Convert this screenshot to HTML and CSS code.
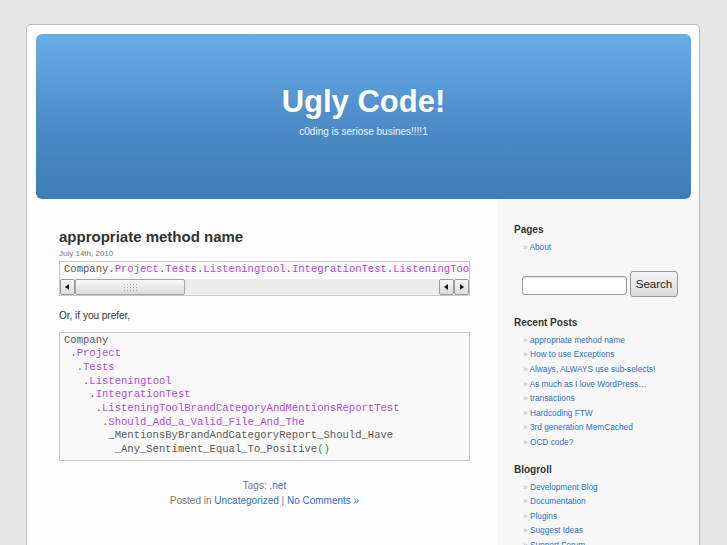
FILE: index.html
```html
<!DOCTYPE html>
<html lang="en">
<head>
<meta charset="utf-8">
<title>Ugly Code!</title>
<link rel="stylesheet" href="styles.css">
</head>
<body>
<div class="page">
  <div class="header-wrap">
    <header class="header">
      <h1 class="site-title">Ugly Code!</h1>
      <div class="site-desc">c0ding is seriose busines!!!!1</div>
    </header>
  </div>
  <div class="body">
    <main class="main">
      <article class="post">
        <h2 class="post-title">appropriate method name</h2>
        <div class="post-date">July 14th, 2010</div>
        <div class="codebox">
          <div class="code-line"><span class="g">Company.</span><span class="p">Project</span><span class="g">.</span><span class="p">Tests</span><span class="g">.</span><span class="p">Listeningtool</span><span class="g">.</span><span class="p">IntegrationTest</span><span class="g">.</span><span class="p">ListeningToolBrandCategoryAndMentionsReportTest</span><span class="g">.</span><span class="p">Should_Add_a_Valid_File_And_The</span><span class="g">_MentionsByBrandAndCategoryReport_Should_Have_Any_Sentiment_Equal_To_Positive</span><span class="gr">()</span></div>
          <div class="hscroll">
            <span class="sb-btn sb-left"></span>
            <span class="sb-thumb"><span class="sb-grip"></span></span>
            <span class="sb-track"></span>
            <span class="sb-btn sb-left"></span>
            <span class="sb-btn sb-right"></span>
          </div>
        </div>
        <p class="post-text">Or, if you prefer,</p>
        <pre class="codebox block"><span class="g">Company</span>
 <span class="g">.</span><span class="p">Project</span>
  <span class="g">.</span><span class="p">Tests</span>
   <span class="g">.</span><span class="p">Listeningtool</span>
    <span class="g">.</span><span class="p">IntegrationTest</span>
     <span class="g">.</span><span class="p">ListeningToolBrandCategoryAndMentionsReportTest</span>
      <span class="g">.</span><span class="p">Should_Add_a_Valid_File_And_The</span>
       <span class="g">_MentionsByBrandAndCategoryReport_Should_Have</span>
        <span class="g">_Any_Sentiment_Equal_To_Positive</span><span class="gr">()</span></pre>
        <div class="post-meta">
          <div>Tags: <a href="#">.net</a></div>
          <div>Posted in <a href="#">Uncategorized</a> | <a href="#">No Comments »</a></div>
        </div>
      </article>
    </main>
    <aside class="sidebar">
      <h2 class="side-title">Pages</h2>
      <ul class="side-list">
        <li><a href="#">About</a></li>
      </ul>
      <form class="search">
        <input class="search-input" type="text">
        <button class="search-btn" type="button">Search</button>
      </form>
      <h2 class="side-title recent">Recent Posts</h2>
      <ul class="side-list">
        <li><a href="#">appropriate method name</a></li>
        <li><a href="#">How to use Exceptions</a></li>
        <li><a href="#">Always, ALWAYS use sub-selects!</a></li>
        <li><a href="#">As much as I love WordPress…</a></li>
        <li><a href="#">transactions</a></li>
        <li><a href="#">Hardcoding FTW</a></li>
        <li><a href="#">3rd generation MemCached</a></li>
        <li><a href="#">OCD code?</a></li>
      </ul>
      <h2 class="side-title blogroll">Blogroll</h2>
      <ul class="side-list">
        <li><a href="#">Development Blog</a></li>
        <li><a href="#">Documentation</a></li>
        <li><a href="#">Plugins</a></li>
        <li><a href="#">Suggest Ideas</a></li>
        <li><a href="#">Support Forum</a></li>
      </ul>
    </aside>
  </div>
</div>
</body>
</html>
```
FILE: styles.css
```css
html, body {
  margin: 0;
  padding: 0;
}
body {
  background: #e7e7e7;
  font-family: "Liberation Sans", Arial, sans-serif;
  color: #333;
  overflow: hidden;
}
.page {
  margin: 24px 0 0 26px;
  width: 672px;
  background: #fdfdfd;
  border: 1px solid #bcbcbc;
  border-bottom: none;
  border-radius: 5px 5px 0 0;
  min-height: 600px;
}
.header-wrap {
  padding: 9px 8px 0 9px;
}
.header {
  height: 165px;
  border-radius: 6px;
  background: linear-gradient(#69ade7, #4b8cc9 55%, #3f7db5);
  color: #fff;
  text-align: center;
  box-sizing: border-box;
  padding-top: 50px;
}
.site-title {
  margin: 0;
  font-size: 31px;
  line-height: 36px;
  font-weight: bold;
}
.site-desc {
  margin-top: 6px;
  font-size: 10px;
  line-height: 12px;
  color: #eef3fa;
}
.body {
  display: flex;
}
.main {
  width: 471px;
  box-sizing: border-box;
  padding: 28.5px 28px 0 32px;
}
.post-title {
  margin: 0;
  font-size: 15px;
  line-height: 18px;
  font-weight: bold;
  color: #333;
}
.post-date {
  margin-top: 3px;
  font-size: 8px;
  line-height: 10px;
  color: #777;
}
.codebox {
  margin: 2.5px 0 0;
  border: 1px solid #c8c8c8;
  background: #f9f9f9;
  font-family: "Liberation Mono", "Courier New", monospace;
  font-size: 10.55px;
  line-height: 13.66px;
  color: #555;
  padding: 1px 0 1px;
}
.code-line {
  padding: 0 4px;
  white-space: pre;
  overflow: hidden;
}
.g { color: #5a5a5a; }
.p { color: #b24be3; }
.gr { color: #2a8a2a; }
.hscroll {
  margin-top: 2px;
  height: 15px;
  display: flex;
  background: #ececec;
}
.sb-btn {
  width: 13px;
  height: 14px;
  border: 1px solid #9c9c9c;
  border-radius: 2px;
  background: linear-gradient(#f7f7f7, #dcdcdc);
  position: relative;
  box-sizing: content-box;
  flex: none;
}
.sb-btn::after {
  content: "";
  position: absolute;
  top: 4px;
  width: 0;
  height: 0;
  border-top: 3.5px solid transparent;
  border-bottom: 3.5px solid transparent;
}
.sb-left::after {
  left: 4px;
  border-right: 4px solid #111;
}
.sb-right::after {
  left: 5px;
  border-left: 4px solid #111;
}
.sb-thumb {
  width: 108px;
  height: 14px;
  border: 1px solid #a5a5a5;
  border-radius: 2px;
  background: linear-gradient(#f8f8f8, #dedede);
  position: relative;
  flex: none;
}
.sb-grip {
  position: absolute;
  left: 47px;
  top: 3px;
  width: 15px;
  height: 9px;
  background-image: radial-gradient(circle, #a8a8a8 0.7px, transparent 1px);
  background-size: 3px 3px;
}
.sb-track {
  flex: 1;
}
.post-text {
  margin: 13px 0 0;
  font-size: 10px;
  line-height: 14px;
  color: #333;
}
.codebox.block {
  margin-top: 9px;
  padding: 1px 4px 3px;
  white-space: pre;
  overflow: hidden;
}
.post-meta {
  margin-top: 17px;
  text-align: center;
  font-size: 10px;
  line-height: 15px;
  color: #777;
}
a {
  color: #2a72cc;
  text-decoration: none;
}
.sidebar {
  flex: 1;
  background: #f7f7f7;
  padding: 24px 0 0 16px;
  min-height: 400px;
}
.side-title {
  margin: 0 0 3px;
  font-size: 10px;
  line-height: 14px;
  font-weight: bold;
  color: #333;
}
.side-title.recent {
  margin-top: 19px;
}
.side-title.blogroll {
  margin-top: 13px;
}
.side-list {
  list-style: none;
  margin: 0;
  padding: 0 0 0 9px;
  font-size: 8.3px;
  line-height: 14.6px;
}
.side-list li::before {
  content: "\00BB\0020";
  color: #bbb;
}
.search {
  margin: 16.3px 0 0 8px;
  display: flex;
  align-items: flex-end;
  gap: 3px;
}
.search-input {
  width: 105px;
  height: 19px;
  box-sizing: border-box;
  margin: 0 0 2px;
  border: 1px solid #999;
  border-radius: 3px;
  background: #fff;
  box-shadow: inset 0 1px 1px rgba(0,0,0,0.12);
  padding: 0;
}
.search-btn {
  width: 48px;
  height: 26px;
  box-sizing: border-box;
  margin: 0;
  padding: 0;
  border: 1px solid #9a9a9a;
  border-radius: 3px;
  background: linear-gradient(#f6f6f6, #dadada);
  font-family: "Liberation Sans", Arial, sans-serif;
  font-size: 11.5px;
  color: #222;
}
```
